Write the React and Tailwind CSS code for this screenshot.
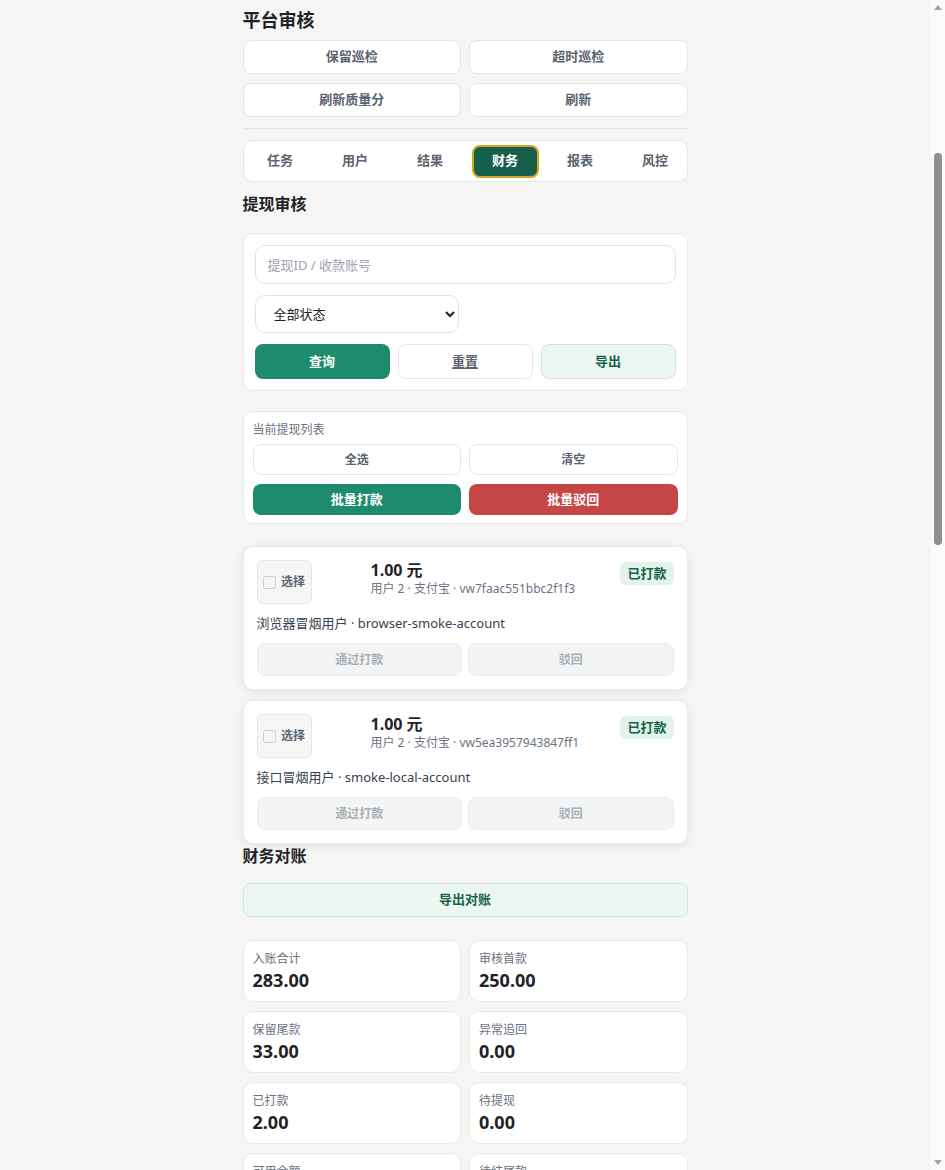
import { useState } from 'react';

const TOP_ACTIONS = ['保留巡检', '超时巡检', '刷新质量分', '刷新'];
const TABS = ['任务', '用户', '结果', '财务', '报表', '风控'];

const WITHDRAWALS = [
  { id: 'vw7faac551bbc2f1f3', amount: '1.00', user: '用户 2', channel: '支付宝', name: '浏览器冒烟用户', account: 'browser-smoke-account', status: '已打款' },
  { id: 'vw5ea3957943847ff1', amount: '1.00', user: '用户 2', channel: '支付宝', name: '接口冒烟用户', account: 'smoke-local-account', status: '已打款' },
];

const STATS = [
  { label: '入账合计', value: '283.00' },
  { label: '审核首款', value: '250.00' },
  { label: '保留尾款', value: '33.00' },
  { label: '异常追回', value: '0.00' },
  { label: '已打款', value: '2.00' },
  { label: '待提现', value: '0.00' },
  { label: '可用余额', value: '281.00' },
  { label: '待结尾款', value: '0.00' },
];

export default function App() {
  const [tab, setTab] = useState('财务');
  const [keyword, setKeyword] = useState('');
  const [status, setStatus] = useState('all');

  return (
    <div className="min-h-screen bg-[#f5f5f3] font-['Noto_Sans','Noto_Sans_CJK_SC',sans-serif] text-[#1f2328]">
      <div className="w-[930px]">
        <div className="w-[445px] mx-auto pt-2 pb-10">

          {/* Header */}
          <h1 className="text-[18px] leading-[25px] font-bold mb-[7px]">平台审核</h1>
          <div className="grid grid-cols-2 gap-x-2 gap-y-[9px]">
            {TOP_ACTIONS.map(a => (
              <button key={a} type="button" className="h-[34px] bg-white border border-[#e6e6e4] rounded-lg text-[13px] font-bold text-[#5b6370]">
                {a}
              </button>
            ))}
          </div>

          <div className="border-t border-[#e3e3e1] mt-[11px] mb-[11px]" />

          {/* Tabs */}
          <div className="h-[42px] bg-white border border-[#e6e6e4] rounded-[10px] pl-[3px] flex items-center gap-2 overflow-hidden">
            {TABS.map(t => (
              <button
                key={t}
                type="button"
                onClick={() => setTab(t)}
                className={`w-[67px] shrink-0 h-[33px] rounded-lg text-[13px] font-bold ${
                  tab === t
                    ? 'bg-[#155f4b] text-white border-2 border-[#d9a521]'
                    : 'text-[#5b6370]'
                }`}
              >{t}</button>
            ))}
          </div>

          {/* Withdraw review */}
          <h2 className="text-[16px] leading-6 font-bold mt-[10px] mb-[17px]">提现审核</h2>

          <div className="bg-white border border-[#e9e9e7] rounded-[10px] p-[11px]">
            <input
              type="text"
              value={keyword}
              onChange={e => setKeyword(e.target.value)}
              placeholder="提现ID / 收款账号"
              className="w-full h-[39px] border border-[#e4e4e2] rounded-[10px] px-3 text-[13px] placeholder-[#9ca3af] outline-none"
            />
            <select
              value={status}
              onChange={e => setStatus(e.target.value)}
              className="mt-[11px] w-[204px] h-[38px] border border-[#e4e4e2] rounded-[10px] px-[14px] text-[13px] text-[#1f2328] bg-white outline-none"
            >
              <option value="all">全部状态</option>
              <option value="pending">待审核</option>
              <option value="paid">已打款</option>
              <option value="rejected">已驳回</option>
            </select>
            <div className="mt-[11px] grid grid-cols-3 gap-2">
              <button type="button" className="h-[35px] rounded-lg bg-[#1e8c6c] text-white text-[13px] font-bold">查询</button>
              <button type="button" className="h-[35px] rounded-lg bg-white border border-[#e6e6e4] text-[#5b6370] text-[13px] font-bold underline underline-offset-2">重置</button>
              <button type="button" className="h-[35px] rounded-lg bg-[#ebf7f0] border border-[#cfe7da] text-[#17624f] text-[13px] font-bold">导出</button>
            </div>
          </div>

          {/* Batch actions */}
          <div className="mt-5 bg-white border border-[#e9e9e7] rounded-[10px] px-[9px] pt-[9px] pb-2">
            <p className="text-[12px] leading-[18px] text-[#6b7280]">当前提现列表</p>
            <div className="mt-[5px] grid grid-cols-2 gap-x-2 gap-y-[9px]">
              <button type="button" className="h-[31px] bg-white border border-[#e6e6e4] rounded-lg text-[12px] font-bold text-[#5b6370]">全选</button>
              <button type="button" className="h-[31px] bg-white border border-[#e6e6e4] rounded-lg text-[12px] font-bold text-[#5b6370]">清空</button>
              <button type="button" className="h-[31px] bg-[#1e8c6c] rounded-lg text-[13px] font-bold text-white">批量打款</button>
              <button type="button" className="h-[31px] bg-[#c64646] rounded-lg text-[13px] font-bold text-white">批量驳回</button>
            </div>
          </div>

          {/* Withdraw list */}
          <div className="mt-[22px] space-y-[10px]">
            {WITHDRAWALS.map(w => (
              <div key={w.id} className="bg-white border border-[#ececea] rounded-[10px] p-[13px] shadow-[0_2px_10px_rgba(0,0,0,0.08)]">
                <div className="grid grid-cols-[100px_1fr_auto] gap-[14px]">
                  <label className="w-[55px] h-[44px] rounded-md bg-[#f6f6f4] border border-[#e6e6e4] flex items-center justify-center gap-[5px]">
                    <input type="checkbox" disabled className="w-[13px] h-[13px] m-0" />
                    <span className="text-[12px] font-bold text-[#5b6370]">选择</span>
                  </label>
                  <div className="min-w-0">
                    <p className="text-[16px] leading-[21px] font-bold">{w.amount} 元</p>
                    <p className="text-[12px] leading-[16px] text-[#6b7280]">{w.user} · {w.channel} · {w.id}</p>
                  </div>
                  <div>
                    <span className="inline-block px-[7px] py-1 rounded-md bg-[#e2f3e9] text-[#17624f] text-[13px] leading-[15px] font-bold">{w.status}</span>
                  </div>
                </div>
                <p className="mt-[9px] text-[13px] leading-5 text-[#374151]">{w.name} · {w.account}</p>
                <div className="mt-[10px] grid grid-cols-2 gap-[6px]">
                  <button type="button" disabled className="h-[33px] rounded-lg bg-[#f3f4f4] border border-[#ececec] text-[12px] font-bold text-[#a9aeb4]">通过打款</button>
                  <button type="button" disabled className="h-[33px] rounded-lg bg-[#f3f4f4] border border-[#ececec] text-[12px] font-bold text-[#a9aeb4]">驳回</button>
                </div>
              </div>
            ))}
          </div>

          {/* Reconciliation */}
          <h2 className="text-[16px] leading-6 font-bold">财务对账</h2>
          <button type="button" className="mt-[15px] w-full h-[34px] rounded-lg bg-[#ebf7f0] border border-[#cfe7da] text-[#17624f] text-[13px] font-bold">导出对账</button>

          <div className="mt-[23px] grid grid-cols-2 gap-x-2 gap-y-[9px]">
            {STATS.map(s => (
              <div key={s.label} className="bg-white border border-[#e9e9e7] rounded-[10px] p-[9px]">
                <p className="text-[12px] leading-[18px] text-[#6b7280]">{s.label}</p>
                <p className="text-[18px] leading-6 font-bold">{s.value}</p>
              </div>
            ))}
          </div>
        </div>
      </div>

      {/* Scrollbar gutter */}
      <div className="fixed top-0 right-0 w-[15px] h-screen bg-[#fafafa] flex flex-col items-center">
        <div className="mt-[5px] w-0 h-0 border-x-[4px] border-x-transparent border-b-[5px] border-b-[#a3a3a3]" />
        <div className="mt-[143px] w-[8px] h-[392px] rounded-full bg-[#8f8f8f]" />
        <div className="mt-auto mb-[5px] w-0 h-0 border-x-[4px] border-x-transparent border-t-[5px] border-t-[#a3a3a3]" />
      </div>
    </div>
  );
}
